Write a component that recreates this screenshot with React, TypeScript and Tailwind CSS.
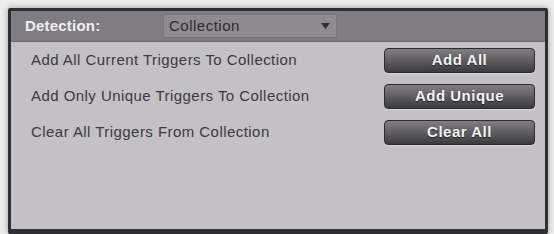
const rows = [
  { label: "Add All Current Triggers To Collection", button: "Add All" },
  { label: "Add Only Unique Triggers To Collection", button: "Add Unique" },
  { label: "Clear All Triggers From Collection", button: "Clear All" },
];

export default function App() {
  return (
    <div className="w-[554px] h-[234px] bg-[#ededed] pt-[8px] pl-[8px] pr-[6px] overflow-hidden font-['Liberation_Sans',Arial,sans-serif]">
      <div className="h-[226px] border-[3px] border-b-[5px] border-[#2f2e32] rounded-[2px] bg-[#c3c0c6] shadow-[0_0_6px_rgba(0,0,0,0.35)] flex flex-col">
        {/* header */}
        <div className="h-[31px] bg-[#7f7c84] flex items-center pl-[14px] border-b border-[#6c6a70]">
          <span className="w-[138px] text-[15px] font-bold text-[#f0eff2] tracking-[0.2px]">
            Detection:
          </span>
          <div className="w-[174px] h-[24px] bg-[#8d8a91] border border-[#77747b] flex items-center justify-between pl-[5px] pr-[6px]">
            <span className="text-[15px] tracking-[0.5px] text-[#2e2d31]">Collection</span>
            <svg width="9" height="6" viewBox="0 0 9 6">
              <path d="M0 0 L9 0 L4.5 6 Z" fill="#2e2d31" />
            </svg>
          </div>
        </div>

        {/* rows */}
        <div className="flex flex-col gap-[11px] pt-[6px] pl-[20px] pr-[10px]">
          {rows.map((r) => (
            <div key={r.button} className="flex items-center justify-between">
              <span className="text-[15px] tracking-[0.45px] text-[#3b3a3e]">{r.label}</span>
              <button className="w-[151px] h-[25px] rounded-[4px] border border-[#2c2b2e] bg-gradient-to-b from-[#817f84] via-[#5f5d62] to-[#3b3a3d] shadow-[0_1px_1px_rgba(255,255,255,0.4)] text-[15px] tracking-[0.5px] font-bold text-[#f4f4f4] [text-shadow:0_1px_1px_rgba(0,0,0,0.6)]">
                {r.button}
              </button>
            </div>
          ))}
        </div>
      </div>
    </div>
  );
}
